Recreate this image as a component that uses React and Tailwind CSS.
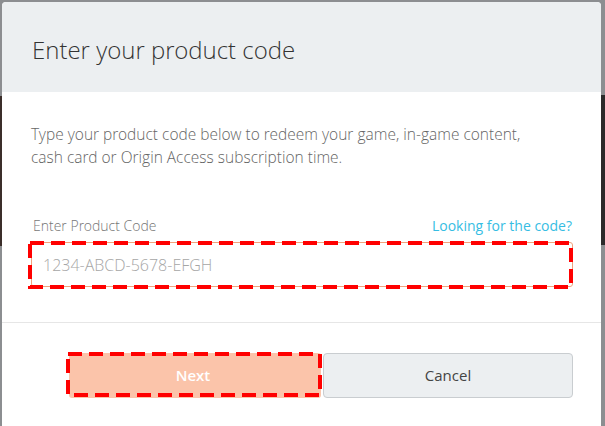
import React from 'react'

const FONT = "font-['Open_Sans','Liberation_Sans',sans-serif]"
const LIGHT = "font-['Open_Sans_Light','Open_Sans','Liberation_Sans',sans-serif] font-light"

const DashedMark = ({ width, height, className }) => (
  <svg
    className={`pointer-events-none absolute ${className}`}
    width={width}
    height={height}
    viewBox={`0 0 ${width} ${height}`}
  >
    <rect
      x="2"
      y="2"
      width={width - 4}
      height={height - 4}
      fill="none"
      stroke="#ff0000"
      strokeWidth="4"
      strokeDasharray="14 7"
    />
  </svg>
)

export default function App() {
  return (
    <div className={`relative h-[426px] w-[605px] overflow-hidden bg-[#8c8e91] pl-[2px] pr-[4px] pt-[2px] ${FONT}`}>
      {/* backdrop peeking out at the sides */}
      <div className="absolute left-0 top-[96px] h-[150px] w-[2px] bg-[#3b2e2a]" />
      <div className="absolute right-0 top-[95px] h-[150px] w-[4px] bg-[#2c2a2a]" />

      <div className="relative flex h-full flex-col overflow-hidden rounded-t-[4px] bg-white">
        <header className="flex h-[90px] shrink-0 items-center bg-[#eceff1] px-[30px] pt-[6px]">
          <h1 className={`text-[24px] text-[#333] ${LIGHT}`}>Enter your product code</h1>
        </header>

        <div className="px-[29px] pt-[31px]">
          <p className={`pr-[40px] text-[15.5px] leading-[23px] text-[#666] ${LIGHT}`}>
            Type your product code below to redeem your game, in-game content, cash card or Origin Access subscription time.
          </p>

          <div className="mt-[46px] flex h-[20px] items-center justify-between pl-[2px]">
            <span className={`text-[14px] text-[#777] ${LIGHT}`}>Enter Product Code</span>
            <a className="text-[14px] text-[#36bde3]">Looking for the code?</a>
          </div>

          <div className="relative mt-[7px] h-[45px] w-[542px]">
            <input
              className={`h-full w-full rounded-[3px] border border-[#f2a27c] bg-white pl-[11px] text-[16px] text-[#333] outline-none placeholder:text-[#a6a6a6] ${LIGHT}`}
              placeholder="1234-ABCD-5678-EFGH"
            />
            <DashedMark width={545} height={48} className="-left-[3px] -top-[1px]" />
          </div>
        </div>

        <div className="mt-[35px] border-t border-[#e6e6e6] pr-[28px] pt-[30px]">
          <div className="flex justify-end gap-[2px]">
            <div className="relative h-[45px] w-[252px]">
              <button className="h-full w-full rounded-[3px] bg-[#fbc4aa] pr-[4px] text-[15px] font-semibold text-white">
                Next
              </button>
              <DashedMark width={256} height={45} className="-left-[3px] -top-[1px]" />
            </div>
            <button className="h-[45px] w-[250px] rounded-[4px] border border-[#c9cdd0] bg-[#eceff1] text-[15px] text-[#444]">
              Cancel
            </button>
          </div>
        </div>
      </div>
    </div>
  )
}
